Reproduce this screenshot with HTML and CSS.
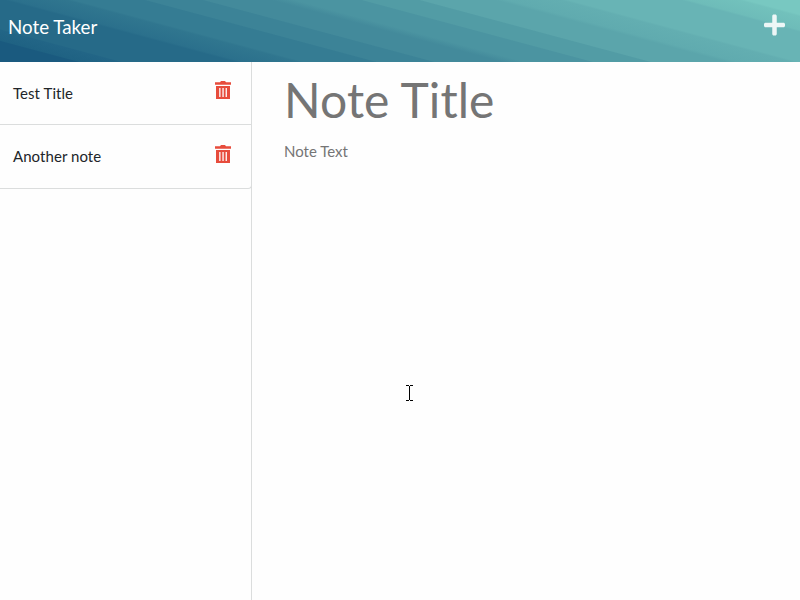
FILE: index.html
```html
<!DOCTYPE html>
<html lang="en">
<head>
<meta charset="utf-8">
<title>Note Taker</title>
<link rel="stylesheet" href="styles.css">
</head>
<body>
<nav class="navbar">
  <a class="brand">Note Taker</a>
  <svg class="plus" viewBox="0 0 448 512" aria-hidden="true"><path d="M416 208H272V64c0-17.67-14.33-32-32-32h-32c-17.67 0-32 14.33-32 32v144H32c-17.67 0-32 14.33-32 32v32c0 17.67 14.33 32 32 32h144v144c0 17.67 14.33 32 32 32h32c17.67 0 32-14.33 32-32V304h144c17.67 0 32-14.33 32-32v-32c0-17.67-14.33-32-32-32z"/></svg>
</nav>
<main class="layout">
  <aside class="sidebar">
    <ul class="notes">
      <li class="note"><span>Test Title</span>
        <svg class="trash" viewBox="0 0 16 18" aria-hidden="true"><path fill-rule="evenodd" d="M0 1.3h5L6 0h4l1 1.3h5v2.4H0zM1 5h14v13H1zM4.2 7v9h1.3V7zM7.4 7v9h1.3V7zM10.6 7v9h1.3V7z"/></svg>
      </li>
      <li class="note"><span>Another note</span>
        <svg class="trash" viewBox="0 0 16 18" aria-hidden="true"><path fill-rule="evenodd" d="M0 1.3h5L6 0h4l1 1.3h5v2.4H0zM1 5h14v13H1zM4.2 7v9h1.3V7zM7.4 7v9h1.3V7zM10.6 7v9h1.3V7z"/></svg>
      </li>
    </ul>
  </aside>
  <section class="editor">
    <div class="title">Note Title</div>
    <div class="text">Note Text</div>
  </section>
</main>
<svg class="cursor" viewBox="0 0 7 16" shape-rendering="crispEdges" aria-hidden="true"><path d="M0 0h3v1H0zM4 0h3v1H4zM3 1h1v14H3zM0 15h3v1H0zM4 15h3v1H4z"/></svg>
</body>
</html>
```

FILE: styles.css
```css
* { box-sizing: border-box; }
body {
  margin: 0;
  height: 100vh;
  display: flex;
  flex-direction: column;
  overflow: hidden;
  background: #fefefe;
  color: #212529;
  font: 15px/1.5 Lato, sans-serif;
}
.navbar {
  height: 62px;
  flex: none;
  display: flex;
  justify-content: space-between;
  align-items: flex-start;
  padding: 13px 15px 0 8px;
  background: linear-gradient(15deg,
    #1a5a7f 20px, #1f6283 21px, #226586 31px, #266a88 32px 61px,
    #2b708c 63px, #30768f 77px, #357c93 79px 97px, #3c8397 98px 112px,
    #438a9b 113px 130px, #4b94a1 136px 153px, #529ca5 154px 168px,
    #5ba5ab 169px 188px, #60abaf 191px, #63aeb1 205px, #68b4b5 207px 236px,
    #6ebcb9 238px, #72c1bc 251px, #78c8c1 253px);
}
.brand { color: #fff; font-size: 18.75px; line-height: 28px; }
.plus { width: 21px; height: 24px; fill: #fff; fill-opacity: .88; }
.layout { flex: 1; display: flex; }
.sidebar { width: 252px; border-right: 1px solid #dbdddd; }
.notes { margin: 0; padding: 0; list-style: none; }
.note {
  display: flex;
  justify-content: space-between;
  align-items: flex-start;
  height: 64px;
  margin-right: -1px;
  padding: 20px 20px 0 13px;
  border: solid #dbdddd;
  border-width: 0 1px 1px 0;
  letter-spacing: .06px;
}
.note:first-child { height: 63px; }
.note:last-child { border-bottom-right-radius: 4px; }
.trash { width: 16px; height: 18px; fill: #e74c3c; }
.note:first-child .trash { margin-top: -1px; }
.editor { padding: 2px 0 0 32px; color: #757575; }
.title { font-size: 48px; line-height: 72px; letter-spacing: .1px; }
.text { margin-top: 4px; }
.cursor { position: absolute; left: 406px; top: 385px; width: 7px; height: 16px; }
```
